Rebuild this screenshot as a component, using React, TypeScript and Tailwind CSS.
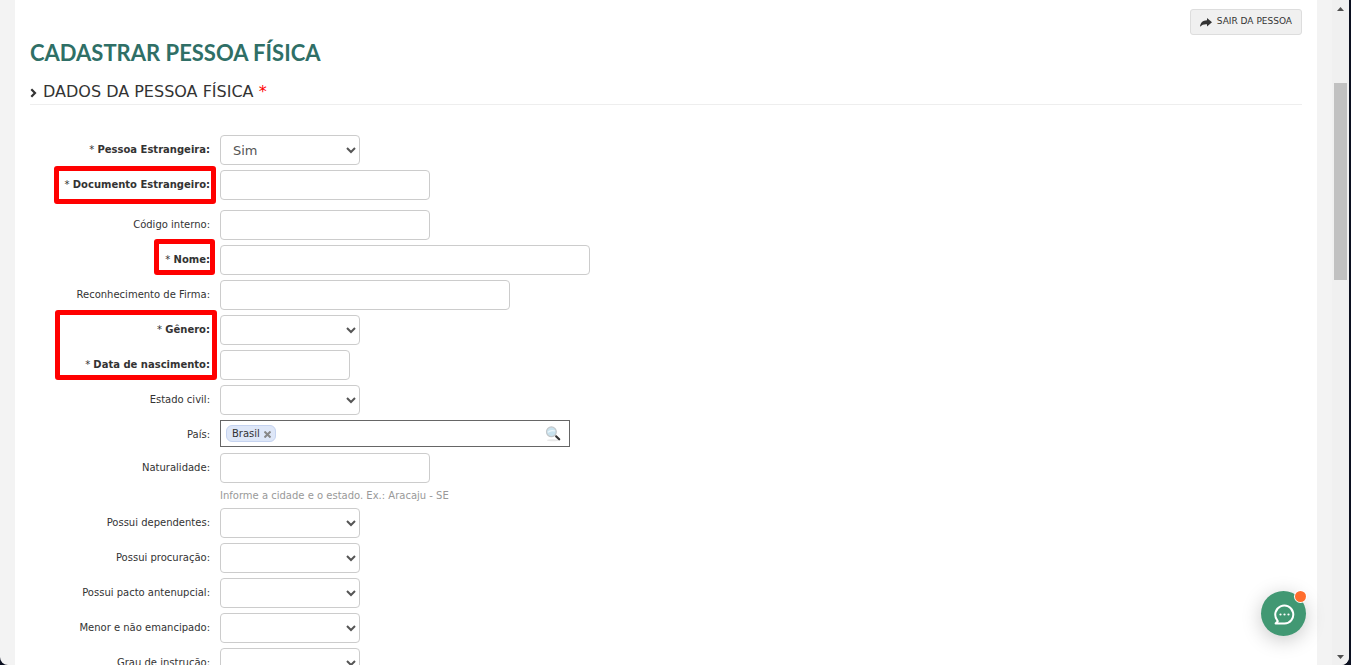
import type { ReactNode } from "react";

const control =
  "h-[30px] rounded border border-[#ccc] bg-white text-[13px] text-[#555] outline-none focus:border-[#2f6f66]";

type RowProps = {
  id: string;
  label: string;
  required?: boolean;
  children: ReactNode;
};

function Row({ id, label, required, children }: RowProps) {
  return (
    <div className="flex gap-[10px]">
      <label
        htmlFor={id}
        className={`w-[180px] shrink-0 pt-2 text-right leading-[14px] ${required ? "font-bold" : ""}`}
      >
        {required && <span className="font-normal">* </span>}
        {label}:
      </label>
      <div className="min-w-0">{children}</div>
    </div>
  );
}

type FieldProps = {
  id: string;
  label: string;
  required?: boolean;
};

function SelectRow({ id, label, required, options = [""] }: FieldProps & { options?: string[] }) {
  return (
    <Row id={id} label={label} required={required}>
      <select id={id} className={`${control} block w-[140px] pl-2`}>
        {options.map((option) => (
          <option key={option}>{option}</option>
        ))}
      </select>
    </Row>
  );
}

function TextRow({ id, label, required, width, hint }: FieldProps & { width: string; hint?: string }) {
  return (
    <Row id={id} label={label} required={required}>
      <input id={id} type="text" className={`${control} block px-3 ${width}`} />
      {hint && <p className="pt-[6px] leading-[14px] text-[#999]">{hint}</p>}
    </Row>
  );
}

function Highlight({ className }: { className: string }) {
  return (
    <div className={`pointer-events-none absolute rounded-[3px] border-[5px] border-[#ff0000] ${className}`} />
  );
}

function ShareIcon() {
  return (
    <svg width="12" height="9" viewBox="0 0 12 9" fill="#333">
      <path d="M7 0l5 4.3-5 4.2V6.2C4.2 6 2 6.500 0 8.800.2 4.800 2.800 2.300 7 2.200z" />
    </svg>
  );
}

function SearchIcon() {
  return (
    <svg width="16" height="16" viewBox="0 0 16 16" fill="none">
      <ellipse cx="8" cy="14.3" rx="6" ry="1" fill="#e8e8e8" />
      <path d="M10 9.3l1.4 1.3" stroke="#999" strokeWidth="1.5" />
      <path d="M11.3 10.5l2.9 2.8" stroke="#333" strokeWidth="2.2" strokeLinecap="round" />
      <circle cx="6.4" cy="5.8" r="4.9" fill="#c8e2ee" stroke="#c3c7ca" strokeWidth="1.2" />
      <path d="M2.8 6.4c1.6-1.7 4.6-2.2 7.3-1.4" stroke="#eef7fb" strokeWidth="1.2" />
    </svg>
  );
}

function CountryRow() {
  return (
    <Row id="pais" label="País">
      <div className="mb-px flex h-[27px] w-[350px] items-center border border-[#666] pr-2 pl-[5px]">
        <span className="flex h-[17px] items-center gap-1 rounded-[6px] border border-[#c5d3f0] bg-[#dee7f8] pr-1 pl-[5px]">
          Brasil
          <button type="button" aria-label="Remover Brasil">
            <svg width="7" height="7" viewBox="0 0 7 7" className="mt-px">
              <path d="M.5.5l6 6M6.5.5l-6 6" stroke="#888" strokeWidth="2" />
            </svg>
          </button>
        </span>
        <input id="pais" type="text" className="min-w-0 flex-1 px-1 outline-none" />
        <button type="button" aria-label="Pesquisar país">
          <SearchIcon />
        </button>
      </div>
    </Row>
  );
}

function Scrollbar() {
  return (
    <div className="flex w-[17px] shrink-0 flex-col items-center justify-between bg-[#f0f0f0] py-[6px]">
      <svg width="7" height="4" viewBox="0 0 7 4" className="mt-px">
        <path d="M3.5 0L7 4H0z" fill="#505050" />
      </svg>
      <div className="flex w-full flex-1 flex-col items-center pt-[72px]">
        <div className="h-[34.5%] w-[13px] bg-[#c1c1c1]" />
      </div>
      <svg width="7" height="4" viewBox="0 0 7 4">
        <path d="M0 0h7L3.5 4z" fill="#505050" />
      </svg>
    </div>
  );
}

function ChatButton() {
  return (
    <button
      type="button"
      aria-label="Abrir chat"
      className="fixed right-[45px] bottom-[29px] flex size-[45px] items-center justify-center rounded-full bg-[#419873] shadow-[0_4px_20px_rgba(0,0,0,0.22)]"
    >
      <svg width="22" height="22" viewBox="0 0 22 22" fill="none">
        <path
          d="M4 16.8A9 9 0 1 1 11.5 20.5H2.6L4.8 18.2z"
          stroke="#fff"
          strokeWidth="2"
          strokeLinejoin="round"
        />
        <circle cx="7.5" cy="11.5" r="1.1" fill="#fff" />
        <circle cx="11.5" cy="11.5" r="1.1" fill="#fff" />
        <circle cx="15.5" cy="11.5" r="1.1" fill="#fff" />
      </svg>
      <span className="absolute top-0 right-0 size-[11px] rounded-full bg-[#ff6d2d] ring-1 ring-white" />
    </button>
  );
}

export default function App() {
  return (
    <div className="h-screen bg-[#0b1020] pr-[2px] font-['Verdana','DejaVu_Sans',sans-serif] text-[10px] text-[#333]">
      <div className="flex h-full overflow-hidden rounded-b-lg bg-[#f3f3f3]">
        <main className="mx-[15px] min-w-0 flex-1 overflow-hidden bg-white px-[15px] pt-[9px]">
          <div className="flex justify-end">
            <button
              type="button"
              className="flex h-[26px] items-center gap-[5px] rounded-[3px] border border-[#ddd] bg-[#f0f0f0] px-[9px] text-[9px] text-[#333]"
            >
              <ShareIcon />
              <span>SAIR DA PESSOA</span>
            </button>
          </div>

          <h1 className="pt-[3px] font-['Lato',sans-serif] text-[22px] leading-[30px] font-bold text-[#2f6f66]">
            CADASTRAR PESSOA FÍSICA
          </h1>

          <h2 className="mt-3 flex h-[25px] items-center gap-[6px] border-b border-[#eee] text-[16px] text-[#333]">
            <svg width="7" height="10" viewBox="0 0 7 10" fill="none" className="mt-[2px]">
              <path d="M1.3 1.2L5 5 1.3 8.8" stroke="#333" strokeWidth="2.2" />
            </svg>
            <span>
              DADOS DA PESSOA FÍSICA <span className="text-[#ff0000]">*</span>
            </span>
          </h2>

          <form className="flex flex-col gap-[5px] pt-[30px]">
            <SelectRow id="estrangeira" label="Pessoa Estrangeira" required options={["Sim", "Não"]} />
            <div className="relative pb-[5px]">
              <TextRow id="documento" label="Documento Estrangeiro" required width="w-[210px]" />
              <Highlight className="-top-1 left-6 h-[38px] w-[162px]" />
            </div>
            <TextRow id="codigo" label="Código interno" width="w-[210px]" />
            <div className="relative">
              <TextRow id="nome" label="Nome" required width="w-[370px]" />
              <Highlight className="-top-[6px] left-[124px] h-9 w-[61px]" />
            </div>
            <TextRow id="firma" label="Reconhecimento de Firma" width="w-[290px]" />
            <div className="relative flex flex-col gap-[5px]">
              <SelectRow id="genero" label="Gênero" required />
              <TextRow id="nascimento" label="Data de nascimento" required width="w-[130px]" />
              <Highlight className="-top-[5px] left-[25px] h-[70px] w-[162px]" />
            </div>
            <SelectRow id="civil" label="Estado civil" />
            <CountryRow />
            <TextRow
              id="naturalidade"
              label="Naturalidade"
              width="w-[210px]"
              hint="Informe a cidade e o estado. Ex.: Aracaju - SE"
            />
            <SelectRow id="dependentes" label="Possui dependentes" />
            <SelectRow id="procuracao" label="Possui procuração" />
            <SelectRow id="pacto" label="Possui pacto antenupcial" />
            <SelectRow id="menor" label="Menor e não emancipado" />
            <SelectRow id="instrucao" label="Grau de instrução" />
          </form>
        </main>
        <Scrollbar />
      </div>
      <ChatButton />
    </div>
  );
}
